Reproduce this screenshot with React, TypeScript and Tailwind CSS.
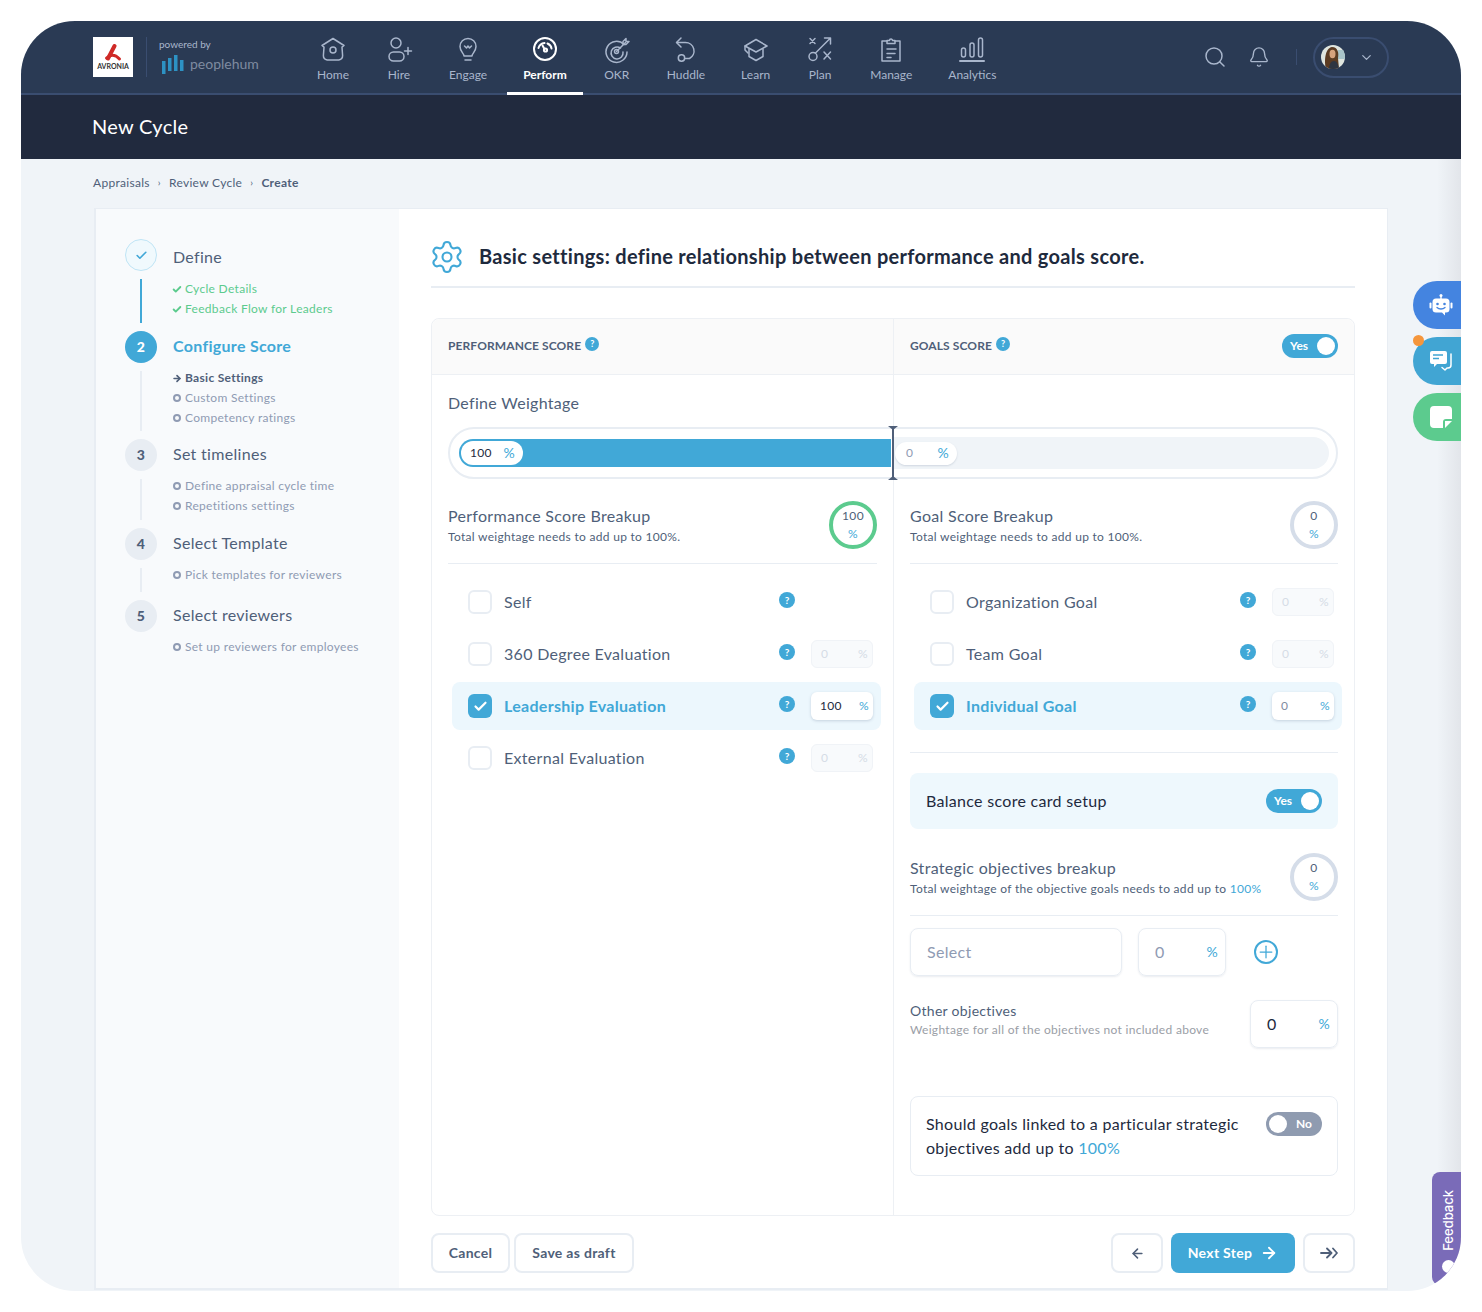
import type { ReactNode } from 'react';
import { Check, Plus, Search, Bell, ChevronDown, ArrowLeft, ArrowRight, Settings } from 'lucide-react';

const stroke = { fill: 'none', stroke: 'currentColor', strokeWidth: 1.5, strokeLinecap: 'round', strokeLinejoin: 'round' } as const;

const NAV_ICONS: Record<string, ReactNode> = {
  Home: (
    <g {...stroke}>
      <path d="M14 2.500 25 9.500l-2 1.600.6 8.400c.1 2.600-1.400 4-3.800 4.500H8.200c-2.400-.5-3.900-1.900-3.800-4.500L5 11.100 3 9.500z" />
      <circle cx="14" cy="14" r="3" />
    </g>
  ),
  Hire: (
    <g {...stroke}>
      <circle cx="11" cy="7" r="5" />
      <rect x="4" y="16" width="15" height="9" rx="4.500" />
      <path d="M23 11.500v7M19.500 15h7" />
    </g>
  ),
  Engage: (
    <g {...stroke}>
      <path d="M10 20c0-2.500-4-4.500-4-9.500a8 8 0 0 1 16 0c0 5-4 7-4 9.500z" />
      <path d="M10.500 10l2 2 1.500-2 1.500 2 2-2M11 24h6" />
    </g>
  ),
  Perform: (
    <g fill="none" stroke="currentColor" strokeWidth="2" strokeLinecap="round">
      <circle cx="14" cy="13" r="11" />
      <path d="M7.500 12a7 7 0 0 1 6-5M16.500 7.500c2.300 1 3.800 2.700 4 5" />
      <path d="m11.500 9.500 2 3.500" />
      <circle cx="14.500" cy="14" r="1.600" />
    </g>
  ),
  OKR: (
    <g {...stroke}>
      <path d="M21 8.500A10.500 10.500 0 1 0 24 16" />
      <path d="M17.500 12a6 6 0 1 0 2.500 4" />
      <circle cx="13.500" cy="15.500" r="2" />
      <path d="m13.500 15.500 9-9M20 5.500v3h3l3-3h-3v-3z" />
    </g>
  ),
  Huddle: (
    <g {...stroke}>
      <path d="M9 2 4.500 6.500 9 11" />
      <path d="M5 6.500h8.500a8.500 8.500 0 0 1 4 16h-4" />
      <circle cx="9.500" cy="22" r="3.200" />
    </g>
  ),
  Learn: (
    <g {...stroke}>
      <path d="M14 3.500 25 10l-11 6-11-6z" />
      <path d="M7 13v7.500l7 4 7-4V13" />
      <path d="M3 10v4l3 3" />
    </g>
  ),
  Plan: (
    <g {...stroke}>
      <path d="m4 2.500 5 5M9 2.500l-5 5M24.500 8V2h-6M24.500 2 9.500 17" />
      <circle cx="7" cy="20.500" r="4" />
      <path d="m18 16 6.500 7M24.500 16 18 23" />
    </g>
  ),
  Manage: (
    <g {...stroke}>
      <path d="M10 5H5v20h18V5h-5" />
      <path d="M10 7.500V4.500h2.500a1.500 1.500 0 0 1 3 0H18v3zM10 13h9M10 17.500h8M10 21.500h4" />
    </g>
  ),
  Analytics: (
    <g {...stroke}>
      <rect x="3.500" y="12" width="4" height="9" rx="2" />
      <rect x="12" y="7" width="4" height="14" rx="2" />
      <rect x="20.500" y="2" width="4" height="19" rx="2" />
      <path d="M2 25h24" strokeWidth="2" />
    </g>
  ),
};

const NAV = ['Home', 'Hire', 'Engage', 'Perform', 'OKR', 'Huddle', 'Learn', 'Plan', 'Manage', 'Analytics'];

function Help({ small }: { small?: boolean }) {
  return (
    <span
      className={`flex shrink-0 items-center justify-center rounded-full bg-[#41a8d7] font-bold tracking-normal text-white ${
        small ? 'h-[14px] w-[14px] text-[9px]' : 'h-4 w-4 text-[10px]'
      }`}
    >
      ?
    </span>
  );
}

function Toggle({ on }: { on: boolean }) {
  return (
    <span
      className={`flex h-6 w-14 shrink-0 items-center rounded-full px-[3px] text-xs font-bold tracking-normal text-white ${
        on ? 'justify-between bg-[#41a8d7] pl-2' : 'justify-between bg-[#8f9bb0] pr-[10px]'
      }`}
    >
      {on ? (
        <>
          <span>Yes</span>
          <span className="h-[18px] w-[18px] rounded-full bg-white" />
        </>
      ) : (
        <>
          <span className="h-[18px] w-[18px] rounded-full bg-white" />
          <span>No</span>
        </>
      )}
    </span>
  );
}

function Ring({ value, done }: { value: string; done?: boolean }) {
  return (
    <div
      className={`flex h-12 w-12 shrink-0 flex-col items-center justify-center rounded-full border-4 text-xs leading-[18px] text-[#4f5f79] ${
        done ? 'border-[#5ccb8e]' : 'border-[#d5dde9]'
      }`}
    >
      <span>{value}</span>
      <span className="text-[#41a8d7]">%</span>
    </div>
  );
}

function PercentBox({ value, active }: { value: string; active?: boolean }) {
  return (
    <div
      className={`flex h-7 w-[62px] shrink-0 items-center justify-between rounded-md pl-[9px] pr-1 text-xs ${
        active
          ? 'bg-white text-[#1e2a3d] shadow-[0_1px_3px_rgba(80,100,130,0.25)]'
          : 'border border-[#f0f3f7] bg-[#f8fafc] text-[#d5dce6]'
      }`}
    >
      <span className={value === '0' && active ? 'text-[#7f8ba0]' : ''}>{value}</span>
      <span className={active ? 'text-[#41a8d7]' : ''}>%</span>
    </div>
  );
}

function ScoreRow({ label, active, value }: { label: string; active?: boolean; value?: string }) {
  return (
    <div
      className={`ml-1 -mr-1 flex h-12 items-center rounded-lg pl-4 pr-2 ${active ? 'bg-[#ecf7fd]' : ''}`}
    >
      {active ? (
        <span className="flex h-6 w-6 items-center justify-center rounded-md bg-[#41a8d7] text-white">
          <Check size={15} strokeWidth={3.5} />
        </span>
      ) : (
        <span className="h-6 w-6 rounded-md border-2 border-[#e8edf3] bg-white" />
      )}
      <span className={`ml-3 flex-1 text-base ${active ? 'font-bold text-[#41a8d7]' : 'text-[#4f5f79]'}`}>{label}</span>
      <span className="-mt-1">
        <Help />
      </span>
      <div className="ml-4 w-[62px]">{value !== undefined && <PercentBox value={value} active={active} />}</div>
    </div>
  );
}

function Sub({ kind, children }: { kind: 'done' | 'current' | 'todo'; children: ReactNode }) {
  return (
    <div
      className={`flex h-5 items-center gap-[4px] text-xs ${
        kind === 'done' ? 'text-[#5ccb8e]' : kind === 'current' ? 'font-bold text-[#4f5f79]' : 'text-[#8f9bb3]'
      }`}
    >
      {kind === 'done' && <Check size={11} strokeWidth={4.5} className="-mx-px w-2.5 shrink-0" />}
      {kind === 'current' && <ArrowRight size={11} strokeWidth={4} className="-mx-px w-2.5 shrink-0" />}
      {kind === 'todo' && <span className="h-2 w-2 rounded-full border-2 border-[#8f9bb3]" />}
      <span>{children}</span>
    </div>
  );
}

function Step({
  badge,
  title,
  titleClass,
  subs,
  kind,
  line,
  subClass,
}: {
  badge: ReactNode;
  title: string;
  titleClass: string;
  subs: ReactNode;
  kind?: 'done' | 'current';
  line: boolean;
  subClass: string;
}) {
  return (
    <div className="flex gap-4">
      <div className="flex w-8 flex-col items-center">
        <span
          className={`flex h-8 w-8 shrink-0 items-center justify-center rounded-full text-sm font-black ${
            kind === 'current'
              ? 'bg-[#41a8d7] text-white'
              : kind === 'done'
                ? 'border border-[#bfe4f5] bg-[#f0f9fd] text-[#41a8d7]'
                : 'bg-[#e8edf3] text-[#4f5f79]'
          }`}
        >
          {badge}
        </span>
        {line && <span className={`my-2 w-0.5 flex-1 ${kind === 'done' ? 'bg-[#41a8d7]' : 'bg-[#e8edf3]'}`} />}
      </div>
      <div>
        <div className={`flex h-8 items-center text-base ${titleClass} ${kind === 'current' ? 'font-bold text-[#41a8d7]' : 'text-[#4f5f79]'}`}>
          {title}
        </div>
        <div className={subClass}>{subs}</div>
      </div>
    </div>
  );
}

function Avatar() {
  return (
    <svg width="24" height="24" viewBox="0 0 24 24" className="rounded-full">
      <rect width="24" height="24" fill="#dfe5df" />
      <rect x="17" y="5" width="7" height="9" fill="#a9c4c9" />
      <path d="M5 24c-2-8-1-21 6-22 6 0 7 6 6 11l1 11z" fill="#5b3b22" />
      <ellipse cx="11.500" cy="9" rx="3" ry="4.200" fill="#d6a27c" />
      <path d="M8 24c0-5 2-8 5-8s4 3 5 8z" fill="#2f3642" />
    </svg>
  );
}

function SmallIconButton({ children }: { children: ReactNode }) {
  return (
    <button type="button" className="flex h-10 w-[52px] items-center justify-center rounded-lg border-2 border-[#e8edf3] bg-white text-[#4f5f79]">
      {children}
    </button>
  );
}

export default function App() {
  return (
    <div className="h-[1312px] w-[1482px] bg-white p-[21px] tracking-[0.3px] [font-family:Lato,'Noto_Sans',sans-serif]">
      <div className="relative flex h-[1270px] w-[1440px] flex-col overflow-hidden rounded-[54px] bg-[#f0f4f8]">
        {/* top nav */}
        <header className="flex h-[74px] shrink-0 items-stretch border-b-2 border-[#3a4d70] bg-[#2a3a54] pl-[72px] pr-[72px] tracking-normal">
          <div className="flex h-[72px] items-center">
            <div className="flex h-10 w-10 flex-col items-center justify-center bg-white">
              <svg width="18" height="18" viewBox="0 0 18 18" fill="none" stroke="#cf2a27" strokeLinecap="round">
                <path d="M10.500 2 4 14.500" strokeWidth="4" />
                <path d="M2.500 14C7 10 11 10 15.500 15" strokeWidth="3" />
              </svg>
              <span className="text-[7px] font-bold leading-[8px] text-[#333]">AVRONIA</span>
            </div>
            <span className="ml-[13px] h-10 w-px bg-[#3a4d70]" />
            <div className="ml-3 w-[111px] pb-[5px]">
              <div className="text-[10px] leading-4 text-[#a9b6cc]">powered by</div>
              <div className="mt-[3px] flex items-center gap-[6px] pl-[3px]">
                <svg width="22" height="19" viewBox="0 0 22 19" fill="#2d92c4">
                  <rect x="0" y="6" width="3.500" height="13" />
                  <rect x="6" y="3" width="3.500" height="13" />
                  <rect x="12" y="0" width="3.500" height="16" />
                  <rect x="18" y="5" width="3.500" height="11" />
                </svg>
                <span className="text-sm leading-4 text-[#7f8ba0]">peoplehum</span>
              </div>
            </div>
          </div>
          <nav className="ml-[31px] flex gap-1">
            {NAV.map((name) => {
              const active = name === 'Perform';
              return (
                <div
                  key={name}
                  className={`-mb-[2px] flex flex-col items-center border-b-[3px] px-4 pt-[15px] text-xs ${
                    active ? 'border-white font-bold text-white' : 'border-transparent text-[#a9b6cc]'
                  }`}
                >
                  <svg width="28" height="28" viewBox="0 0 28 28">
                    {NAV_ICONS[name]}
                  </svg>
                  <span className="mt-[3px]">{name}</span>
                </div>
              );
            })}
          </nav>
          <div className="ml-auto flex h-[72px] items-center text-[#a9b6cc]">
            <Search size={24} strokeWidth={1.5} />
            <Bell size={22} strokeWidth={1.5} className="ml-[21px]" />
            <span className="ml-[26px] h-4 w-px bg-[#3a4d70]" />
            <div className="ml-4 flex h-[41px] w-[76px] items-center rounded-full border-2 border-[#3a4d70] pl-[6px]">
              <Avatar />
              <ChevronDown size={15} className="ml-[14px]" />
            </div>
          </div>
        </header>

        {/* page title */}
        <div className="flex h-[64px] shrink-0 items-center bg-[#212a3e] pb-[2px] pl-[71px] text-xl tracking-[0.3px] text-white">New Cycle</div>

        {/* breadcrumb */}
        <div className="flex h-[49px] shrink-0 items-center gap-2 pb-[2px] pl-[72px] text-xs text-[#4f5f79]">
          <span>Appraisals</span>
          <span className="text-[10px]">›</span>
          <span>Review Cycle</span>
          <span className="text-[10px]">›</span>
          <span className="font-bold">Create</span>
        </div>

        {/* card */}
        <div className="mb-px ml-[73px] flex w-[1294px] flex-1 border border-b-2 border-l-2 border-[#e8edf3] bg-white">
          <aside className="w-[303px] shrink-0 bg-[#f8fafc] pl-[29px] pt-[30px]">
            <Step
              kind="done"
              line
              badge={<Check size={13} strokeWidth={3} />}
              title="Define"
              titleClass="pt-1"
              subClass="mt-2 pb-[12px]"
              subs={
                <>
                  <Sub kind="done">Cycle Details</Sub>
                  <Sub kind="done">Feedback Flow for Leaders</Sub>
                </>
              }
            />
            <Step
              kind="current"
              line
              badge="2"
              title="Configure Score"
              titleClass="pb-[2px]"
              subClass="mt-[5px] pb-[11px]"
              subs={
                <>
                  <Sub kind="current">Basic Settings</Sub>
                  <Sub kind="todo">Custom Settings</Sub>
                  <Sub kind="todo">Competency ratings</Sub>
                </>
              }
            />
            <Step
              line
              badge="3"
              title="Set timelines"
              titleClass="pb-[2px]"
              subClass="mt-[5px] pb-[12px]"
              subs={
                <>
                  <Sub kind="todo">Define appraisal cycle time</Sub>
                  <Sub kind="todo">Repetitions settings</Sub>
                </>
              }
            />
            <Step
              line
              badge="4"
              title="Select Template"
              titleClass="pb-[2px]"
              subClass="mt-[5px] pb-[15px]"
              subs={<Sub kind="todo">Pick templates for reviewers</Sub>}
            />
            <Step
              line={false}
              badge="5"
              title="Select reviewers"
              titleClass="pb-[2px]"
              subClass="mt-[5px]"
              subs={<Sub kind="todo">Set up reviewers for employees</Sub>}
            />
          </aside>

          <main className="flex-1 px-8 pt-8">
            <div className="flex items-center gap-4 border-b-2 border-[#e8edf3] pb-[13px]">
              <Settings size={36} strokeWidth={1.4} className="-m-0.5 text-[#41a8d7]" />
              <h1 className="pb-[3px] text-xl font-bold text-[#1e2a3d]">
                Basic settings: define relationship between performance and goals score.
              </h1>
            </div>

            <div className="mt-[30px] h-[898px] rounded-lg border border-[#edf0f4]">
              <div className="grid h-14 grid-cols-[462px_460px] rounded-t-lg border-b border-[#edf0f4] bg-[#fafafa] pb-[2px] text-xs font-bold tracking-[0.1px] text-[#4f5f79]">
                <div className="-mb-[2px] flex items-center gap-1 border-r border-[#edf0f4] pb-[2px] pl-4">
                  <span>PERFORMANCE SCORE</span>
                  <span className="-mt-1">
                    <Help small />
                  </span>
                </div>
                <div className="flex items-center gap-1 px-4">
                  <span>GOALS SCORE</span>
                  <span className="-mt-1">
                    <Help small />
                  </span>
                  <span className="ml-auto">
                    <Toggle on />
                  </span>
                </div>
              </div>

              <div className="relative px-4 pb-[22px] pt-4">
                <span className="absolute inset-y-0 left-[461px] w-px bg-[#edf0f4]" />
                <div className="h-6 text-base leading-6 text-[#4f5f79]">Define Weightage</div>
                <div className="relative mt-3 flex h-[52px] items-center rounded-full border-2 border-[#e8edf3] bg-white pl-[9px] pr-[7px]">
                  <div className="flex h-7 w-[432px] items-center rounded-l-full bg-[#41a8d7] pl-[2px]">
                    <div className="flex h-6 w-[62px] items-center justify-between rounded-full bg-white pl-[9px] pr-2 text-xs text-[#1e2a3d]">
                      <span>100</span>
                      <span className="text-sm text-[#41a8d7]">%</span>
                    </div>
                  </div>
                  <div className="ml-[2px] flex h-8 flex-1 items-center rounded-r-full bg-[#f0f4f8] pl-[2px]">
                    <div className="flex h-[23px] w-[62px] items-center justify-between rounded-full bg-white pl-[11px] pr-2 text-xs text-[#8f9bb3] shadow-[0_1px_2px_rgba(80,100,130,0.2)]">
                      <span>0</span>
                      <span className="text-sm text-[#41a8d7]">%</span>
                    </div>
                  </div>
                  <span className="absolute -bottom-[3px] -top-[3px] left-[442px] w-0.5 bg-[#4f5f79]" />
                  <span className="absolute -top-[3px] left-[438px] h-1 w-[10px] bg-[#4f5f79] [clip-path:polygon(0_0,100%_0,50%_100%)]" />
                  <span className="absolute -bottom-[3px] left-[438px] h-1 w-[10px] bg-[#4f5f79] [clip-path:polygon(50%_0,100%_100%,0_100%)]" />
                </div>
              </div>

              <div className="grid h-[715px] grid-cols-[462px_460px]">
                {/* performance column */}
                <div className="border-r border-[#edf0f4] px-4">
                  <div className="flex items-center justify-between border-b border-[#e8edf3] pb-[14px]">
                    <div>
                      <div className="text-base leading-5 text-[#4f5f79]">Performance Score Breakup</div>
                      <div className="mt-[3px] text-xs text-[#4f5f79]">Total weightage needs to add up to 100%.</div>
                    </div>
                    <Ring value="100" done />
                  </div>
                  <div className="mt-[14px] flex flex-col gap-1">
                    <ScoreRow label="Self" />
                    <ScoreRow label="360 Degree Evaluation" value="0" />
                    <ScoreRow label="Leadership Evaluation" value="100" active />
                    <ScoreRow label="External Evaluation" value="0" />
                  </div>
                </div>

                {/* goals column */}
                <div className="px-4">
                  <div className="flex items-center justify-between border-b border-[#e8edf3] pb-[14px]">
                    <div>
                      <div className="text-base leading-5 text-[#4f5f79]">Goal Score Breakup</div>
                      <div className="mt-[3px] text-xs text-[#4f5f79]">Total weightage needs to add up to 100%.</div>
                    </div>
                    <Ring value="0" />
                  </div>
                  <div className="mt-[14px] flex flex-col gap-1">
                    <ScoreRow label="Organization Goal" value="0" />
                    <ScoreRow label="Team Goal" value="0" />
                    <ScoreRow label="Individual Goal" value="0" active />
                  </div>

                  <div className="mt-[22px] border-t border-[#e8edf3]" />

                  <div className="mt-5 flex h-14 items-center justify-between rounded-lg bg-[#eef8fd] px-4">
                    <span className="text-base text-[#1e2a3d]">Balance score card setup</span>
                    <Toggle on />
                  </div>

                  <div className="mt-6 flex items-center justify-between border-b border-[#e8edf3] pb-[14px]">
                    <div>
                      <div className="text-base leading-5 text-[#4f5f79]">Strategic objectives breakup</div>
                      <div className="mt-[3px] text-xs text-[#4f5f79]">
                        Total weightage of the objective goals needs to add up to{' '}
                        <span className="text-[#41a8d7]">100%</span>
                      </div>
                    </div>
                    <Ring value="0" />
                  </div>

                  <div className="mt-3 flex items-center">
                    <div className="flex h-12 w-[212px] items-center rounded-lg border border-[#e8edf3] px-4 text-base text-[#8f9bb3] shadow-[0_1px_2px_rgba(80,100,130,0.12)]">
                      Select
                    </div>
                    <div className="ml-4 flex h-12 w-[88px] items-center justify-between rounded-lg border border-[#e8edf3] pl-4 pr-[7px] text-base text-[#8f9bb3] shadow-[0_1px_2px_rgba(80,100,130,0.12)]">
                      <span>0</span>
                      <span className="text-sm text-[#41a8d7]">%</span>
                    </div>
                    <Plus
                      size={20}
                      strokeWidth={1.5}
                      className="ml-7 box-content rounded-full border-2 border-[#41a8d7] text-[#41a8d7]"
                    />
                  </div>

                  <div className="mt-6 flex h-12 items-start justify-between">
                    <div className="pt-px">
                      <div className="text-sm leading-5 text-[#4f5f79]">Other objectives</div>
                      <div className="text-xs leading-[18px] text-[#9a9ea6]">Weightage for all of the objectives not included above</div>
                    </div>
                    <div className="flex h-12 w-[88px] items-center justify-between rounded-lg border border-[#e8edf3] pl-4 pr-[7px] text-base text-[#1e2a3d] shadow-[0_1px_2px_rgba(80,100,130,0.12)]">
                      <span>0</span>
                      <span className="text-sm text-[#41a8d7]">%</span>
                    </div>
                  </div>

                  <div className="mt-12 flex h-20 items-start justify-between rounded-lg border border-[#e8edf3] p-[15px]">
                    <p className="text-base leading-6 text-[#1e2a3d]">
                      Should goals linked to a particular strategic
                      <br />
                      objectives add up to <span className="text-[#41a8d7]">100%</span>
                    </p>
                    <Toggle on={false} />
                  </div>
                </div>
              </div>
            </div>

            <div className="mt-[17px] flex items-center text-sm font-bold text-[#4f5f79]">
              <button type="button" className="h-10 w-[79px] rounded-lg border-2 border-[#e8edf3] bg-white">
                Cancel
              </button>
              <button type="button" className="ml-1 h-10 w-[120px] rounded-lg border-2 border-[#e8edf3] bg-white">
                Save as draft
              </button>
              <div className="ml-auto flex items-center gap-2">
                <SmallIconButton>
                  <ArrowLeft size={15} strokeWidth={2.5} />
                </SmallIconButton>
                <button
                  type="button"
                  className="flex h-10 w-[124px] items-center justify-center gap-2 rounded-lg bg-[#41a8d7] text-white"
                >
                  Next Step
                  <ArrowRight size={18} strokeWidth={2.5} />
                </button>
                <SmallIconButton>
                  <svg width="18" height="12" viewBox="0 0 18 12" fill="none" stroke="currentColor" strokeWidth="1.800" strokeLinecap="round" strokeLinejoin="round">
                    <path d="M1 6h10M7 1.500 11.500 6 7 10.500M13 1.500 17 6l-4 4.500" />
                  </svg>
                </SmallIconButton>
              </div>
            </div>
          </main>
        </div>

        {/* window shade on the right */}
        <div className="pointer-events-none absolute bottom-0 right-0 top-[138px] w-[24px] bg-gradient-to-r from-transparent to-[#e2e5ea]" />

        {/* floating side tabs */}
        <div className="absolute right-0 top-[260px] flex flex-col gap-2">
          <div className="flex h-12 w-12 items-center justify-center rounded-l-[24px] bg-[#4484e0] pl-2">
            <svg width="24" height="24" viewBox="0 0 24 24" fill="#fff">
              <circle cx="12" cy="2.500" r="1.500" />
              <rect x="11.300" y="3" width="1.400" height="3" />
              <path d="M7 5.500h10a3.500 3.500 0 0 1 3.500 3.500v7a3.500 3.500 0 0 1-3.500 3.500h-1v3l-3-3H7A3.500 3.500 0 0 1 3.500 16V9A3.500 3.500 0 0 1 7 5.500z" />
              <rect x="0.500" y="9.500" width="2" height="6" rx="1" />
              <rect x="21.500" y="9.500" width="2" height="6" rx="1" />
              <circle cx="8.500" cy="11" r="1.300" fill="#4484e0" />
              <circle cx="15.500" cy="11" r="1.300" fill="#4484e0" />
              <path d="M8 14.500c2 2 6 2 8 0" fill="none" stroke="#4484e0" strokeWidth="1.300" strokeLinecap="round" />
            </svg>
          </div>
          <div className="relative flex h-12 w-12 items-center justify-center rounded-l-[24px] bg-[#41a5d3] pl-2">
            <span className="absolute left-0 -top-[2px] h-[11px] w-[11px] rounded-full bg-[#f5963c]" />
            <svg width="24" height="22" viewBox="0 0 24 22">
              <path d="M3 1h13a2 2 0 0 1 2 2v9a2 2 0 0 1-2 2H8l-3 3v-3H3a2 2 0 0 1-2-2V3a2 2 0 0 1 2-2z" fill="#fff" />
              <path d="M4 5h10M4 8.500h6" stroke="#41a5d3" strokeWidth="1.500" />
              <path d="M22 4v11a3 3 0 0 1-3 3h-1l-2 2-3-2.500" fill="none" stroke="#fff" strokeWidth="1.500" strokeLinecap="round" strokeLinejoin="round" />
            </svg>
          </div>
          <div className="flex h-12 w-12 items-center justify-center rounded-l-[24px] bg-[#5ccb8e] pl-2">
            <svg width="22" height="22" viewBox="0 0 22 22">
              <path d="M4 0h14a4 4 0 0 1 4 4v9h-6a3 3 0 0 0-3 3v6H4a4 4 0 0 1-4-4V4a4 4 0 0 1 4-4z" fill="#fff" />
              <path d="M15 15h7l-7 7z" fill="#fff" />
            </svg>
          </div>
        </div>

        {/* feedback tab */}
        <div className="absolute bottom-[6px] right-0 flex h-[113px] w-[29px] flex-col items-center rounded-l-lg bg-[#7a6bb8] pl-1 pt-[18px] tracking-normal text-white">
          <span className="rotate-180 text-[13px] font-medium [font-family:Inter,sans-serif] [writing-mode:vertical-rl]">Feedback</span>
          <span className="mt-[9px] flex h-[13px] w-[13px] items-center justify-center rounded-full bg-white" />
        </div>
      </div>
    </div>
  );
}
